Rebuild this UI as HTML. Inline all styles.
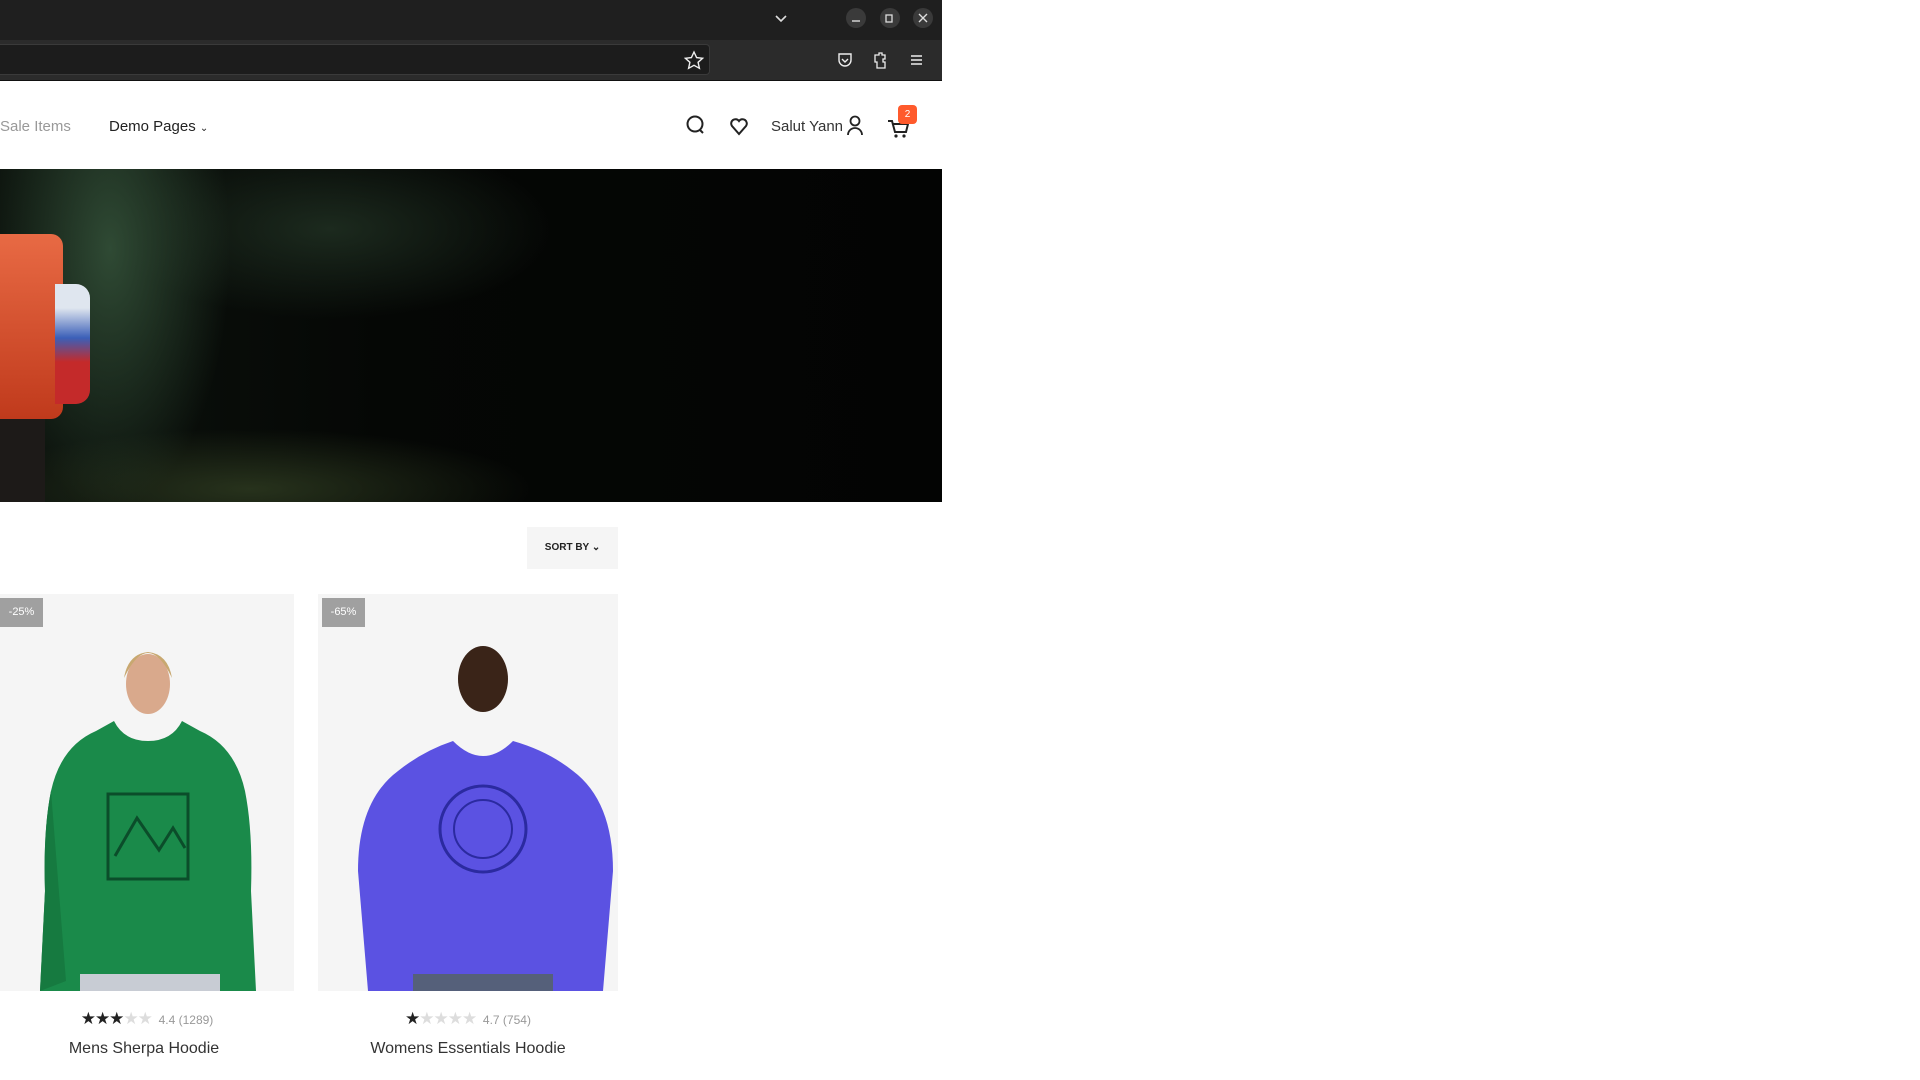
<!DOCTYPE html>
<html><head><meta charset="utf-8"><style>
*{margin:0;padding:0;box-sizing:border-box}
body{width:1920px;height:1080px;background:#fff;font-family:"Liberation Sans",sans-serif;position:relative;overflow:hidden}
.a{position:absolute}
</style></head><body>
<div class="a" style="left:0;top:0;width:942px;height:40px;background:#1f1f1f"></div>
<svg class="a" style="left:770px;top:8px" width="170" height="24">
<path d="M6 8l5 5 5-5" stroke="#ddd" stroke-width="1.6" fill="none"/>
<circle cx="86" cy="10" r="10" fill="#3a3a3a"/><path d="M82 13h8" stroke="#ddd" stroke-width="1.4"/>
<circle cx="120" cy="10" r="10" fill="#3a3a3a"/><rect x="116" y="7" width="6" height="7" stroke="#ddd" fill="none" stroke-width="1.3"/>
<circle cx="153" cy="10" r="10" fill="#3a3a3a"/><path d="M149 6l8 8M157 6l-8 8" stroke="#ddd" stroke-width="1.4"/>
</svg>
<div class="a" style="left:0;top:40px;width:942px;height:41px;background:#2b2b2b;border-bottom:1px solid #111"></div>
<div class="a" style="left:0;top:44px;width:710px;height:31px;background:#1c1c1c;border-radius:0 4px 4px 0;border:1px solid #3a3a3a;border-left:none"></div>
<svg class="a" style="left:684px;top:50px" width="250" height="22">
<path d="M10 2l2.6 5.6 6 .7-4.5 4 1.3 6-5.4-3-5.4 3 1.3-6-4.5-4 6-.7z" stroke="#eee" fill="none" stroke-width="1.4"/>
<path d="M155 4h12v6a6 6 0 0 1-12 0z" stroke="#eee" fill="none" stroke-width="1.4"/><path d="M158 9l3 3 3-3" stroke="#eee" fill="none" stroke-width="1.4"/>
<path d="M191 5h4v-2h3v2h3v4h-2v3h2v6h-8v-6h-2z" stroke="#eee" fill="none" stroke-width="1.3"/>
<path d="M227 6h11M227 10h11M227 14h11" stroke="#eee" stroke-width="1.4"/>
</svg>
<div class="a" style="left:0;top:118px;font-size:15px;color:#999">Sale Items</div>
<div class="a" style="left:109px;top:118px;font-size:15px;color:#222">Demo Pages <span style="font-size:10px">&#x2304;</span></div>
<svg class="a" style="left:684px;top:113px" width="240" height="30">
<circle cx="11" cy="11" r="7.5" stroke="#222" stroke-width="2" fill="none"/><path d="M16 17l3 3" stroke="#222" stroke-width="2"/>
<path d="M55 21l-7-8a4.3 4.3 0 0 1 7-5 4.3 4.3 0 0 1 7 5z" stroke="#222" stroke-width="2" fill="none"/>
<circle cx="171" cy="8" r="4.5" stroke="#222" stroke-width="1.8" fill="none"/><path d="M164 22a7 7 0 0 1 14 0" stroke="#222" stroke-width="1.8" fill="none"/>
<path d="M204 8h4l3 11h11l2-8h-15" stroke="#222" stroke-width="2" fill="none"/><circle cx="212" cy="23" r="1.6" fill="#222"/><circle cx="220" cy="23" r="1.6" fill="#222"/>
</svg>
<div class="a" style="left:771px;top:118px;font-size:15px;color:#333">Salut Yann</div>
<div class="a" style="left:898px;top:105px;width:19px;height:19px;background:#ff5a2c;border-radius:4px;color:#fff;font-size:10px;text-align:center;line-height:19px">2</div>
<div class="a" style="left:0;top:169px;width:942px;height:333px;background:radial-gradient(ellipse 120px 260px at 110px 80px,#2f4a34,rgba(10,20,12,0) 100%),radial-gradient(ellipse 220px 90px at 330px 60px,#1c2a1e,rgba(0,0,0,0)),radial-gradient(ellipse 280px 60px at 250px 320px,#27321c,rgba(0,0,0,0)),linear-gradient(90deg,#0d140e,#050705 40%,#030403);overflow:hidden">
<div class="a" style="left:0;top:65px;width:63px;height:185px;background:linear-gradient(#e86a44,#c03a1c);border-radius:0 12px 12px 0"></div>
<div class="a" style="left:55px;top:115px;width:35px;height:120px;background:linear-gradient(#dfe6ef 20%,#3b5fb8 45%,#c42a2a 65%);border-radius:0 14px 14px 0"></div>
<div class="a" style="left:0;top:250px;width:45px;height:85px;background:#1d1a18"></div>
</div>
<div class="a" style="left:527px;top:527px;width:91px;height:42px;background:#f5f5f5;font-size:10px;font-weight:bold;color:#222;line-height:42px;text-align:center">SORT BY &#x2304;</div>
<div class="a" style="left:0;top:594px;width:294px;height:397px;background:#f5f5f5;overflow:hidden">
<div class="a" style="left:0;top:4px;width:43px;height:29px;background:#a0a0a0;color:#fff;font-size:11px;line-height:29px;text-align:center">-25%</div>
<svg class="a" style="left:0;top:0" width="294" height="397"><ellipse cx="148" cy="90" rx="22" ry="30" fill="#d9a98c"/><path d="M124 84q24-50 48 0q-4-24-24-26q-20 2-24 26" fill="#c8a870"/>
<path d="M40 397l5-100q-2-60 6-100q10-45 45-60l18-10q10 20 34 20q24 0 34-20l18 10q35 15 45 60q8 40 6 100l5 100z" fill="#1a8a4a"/>
<rect x="108" y="200" width="80" height="85" fill="none" stroke="#0b4d2a" stroke-width="3"/><path d="M115 262l22-38 22 32 14-22 12 20" stroke="#0b4d2a" stroke-width="3" fill="none"/>
<rect x="80" y="380" width="140" height="17" fill="#c8ccd4"/><path d="M40 397l5-100q-2-60 6-100l15 190z" fill="#167a40"/></svg></div>
<div class="a" style="left:318px;top:594px;width:300px;height:397px;background:#f5f5f5;overflow:hidden">
<div class="a" style="left:4px;top:4px;width:43px;height:29px;background:#a0a0a0;color:#fff;font-size:11px;line-height:29px;text-align:center">-65%</div>
<svg class="a" style="left:0;top:0" width="300" height="397"><ellipse cx="165" cy="85" rx="25" ry="33" fill="#3a2418"/>
<path d="M50 397l-10-120q0-70 40-100q25-20 55-30q15 15 30 15q15 0 30-15q35 10 60 30q40 30 40 100l-10 120z" fill="#5b52e2"/>
<circle cx="165" cy="235" r="43" fill="none" stroke="#2b2aa0" stroke-width="3"/><circle cx="165" cy="235" r="29" fill="none" stroke="#2b2aa0" stroke-width="2"/><rect x="95" y="380" width="140" height="17" fill="#55607a"/></svg></div>
<div class="a" style="left:0;top:1009px;width:294px;text-align:center;font-size:12px;color:#999;padding-left:0"><span style="color:#222;font-size:17px;letter-spacing:-1px">★★★</span><span style="color:#ddd;font-size:17px;letter-spacing:-1px">★★</span>&nbsp; 4.4 (1289)</div>
<div class="a" style="left:318px;top:1009px;width:300px;text-align:center;font-size:12px;color:#999"><span style="color:#222;font-size:17px;letter-spacing:-1px">★</span><span style="color:#ddd;font-size:17px;letter-spacing:-1px">★★★★</span>&nbsp; 4.7 (754)</div>
<div class="a" style="left:0;top:1040px;width:288px;text-align:center;font-size:16px;color:#333">Mens Sherpa Hoodie</div>
<div class="a" style="left:318px;top:1040px;width:300px;text-align:center;font-size:16px;color:#333">Womens Essentials Hoodie</div>
</body></html>
